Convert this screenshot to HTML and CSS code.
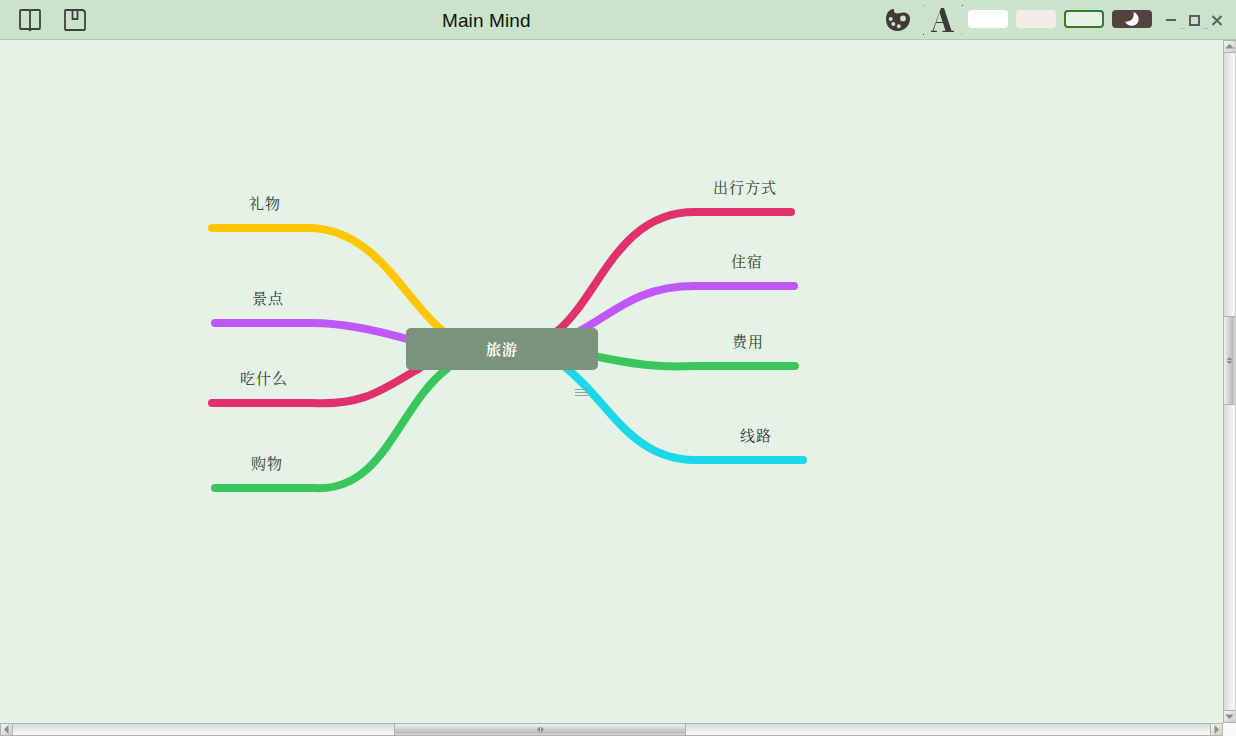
FILE: index.html
```html
<!DOCTYPE html>
<html lang="zh">
<head>
<meta charset="utf-8">
<title>Main Mind</title>
<link rel="stylesheet" href="styles.css">
</head>
<body>
<header class="bar">
  <svg class="icon-book" width="24" height="24" viewBox="0 0 24 24"><path d="M3 2h7.500Q11.500 2 12 3 12.500 2 13.500 2H21Q22 2 22 3V20Q22 21 21 21H13.500L12 22.200 10.500 21H3Q2 21 2 20V3Q2 2 3 2zM12 3v19"/></svg>
  <svg class="icon-save" width="24" height="24" viewBox="0 0 24 24"><path d="M3 2h16.500q2.500.5 2.500 3V21q0 1-1 1H3q-1 0-1-1V3q0-1 1-1zM9.500 2v9h5V2"/></svg>
  <h1 class="title">Main Mind</h1>
  <svg class="icon-palette" width="26" height="24" viewBox="0 0 26 24"><path fill-rule="evenodd" d="M7.500 1C9.500.5 9 2 9 3.500 9.500 5.500 12 6 15 5 19 3.500 24.500 5 25 10c.5 7-5.500 13-12.500 13C5.500 23 1 18 1 11.500 1 6 3 2.500 7.500 1zM18 7.500a2.900 2.900 0 1 0 0 5.800 2.900 2.900 0 1 0 0-5.800zM5.700 9.100a2 2 0 1 0 0 4 2 2 0 1 0 0-4zM8.300 14.100a2 2 0 1 0 0 4 2 2 0 1 0 0-4zM13.800 16.200a2 2 0 1 0 0 4 2 2 0 1 0 0-4z"/></svg>
  <svg class="icon-font" width="40" height="32" viewBox="0 0 40 32"><path d="M18 4h3L28.500 26.700H31V28H19.500v-1.300H22.500L20 19h-7l-2.500 7.700H14V28H8v-1.300h1.500zM16.500 8.500 13.400 18H19.600z" fill-rule="evenodd"/><path d="M0 30h1v1H0zM39 1h1v1h-1z"/><path class="faint" d="M0 2h1V1h1M38 31h1v-1h1"/></svg>
  <div class="themes">
    <button class="swatch white"></button>
    <button class="swatch pink"></button>
    <button class="swatch green"></button>
    <button class="swatch night"><svg width="16" height="16" viewBox="0 0 16 16"><path d="M9.500 1c5 2 6.500 7.500 4 11S4 16.500 1 10.500c5 1 10-3 8.500-9.500z"/></svg></button>
  </div>
  <svg class="window-buttons" width="62" height="20" viewBox="0 0 62 20"><path class="heavy" d="M2 10H12M26 6h9v9h-9zM48.500 6l9 9M57.500 6l-9 9"/><path class="faint" d="M16 18.500h5M39 18.500h5"/></svg>
</header>
<main class="workspace">
  <section class="canvas">
    <svg class="links" width="1223" height="683" viewBox="0 40 1223 683">
      <path class="yellow" d="M212 228H308C377 228 405 302 444 332"/>
      <path class="purple" d="M215 323H312C345 323 380 331 414 341"/>
      <path class="red" d="M212 403H312C365 406 384 388 420 368"/>
      <path class="lime" d="M215 488H315C385 492 398 405 448 368"/>
      <path class="red" d="M791 212H695C616 212 600 298 555 333"/>
      <path class="purple" d="M794 286H695C635 286 612 315 576 333"/>
      <path class="lime" d="M795 366H695C658 368 632 364 594 356"/>
      <path class="cyan" d="M803 460H695C630 460 608 400 565 367"/>
      <path class="grip" d="M575 389.500h13M575 392.500h13M575 395.500h13"/>
    </svg>
    <span class="topic gift">礼物</span>
    <span class="topic sights">景点</span>
    <span class="topic food">吃什么</span>
    <span class="topic shopping">购物</span>
    <span class="topic travel">出行方式</span>
    <span class="topic lodging">住宿</span>
    <span class="topic cost">费用</span>
    <span class="topic route">线路</span>
    <div class="root">旅游</div>
  </section>
  <div class="scroll vertical">
    <i class="arrow"><svg width="9" height="9" viewBox="0 0 9 9"><path d="M0 6.500 4.500 2 9 6.500z"/></svg></i>
    <i class="thumb"><svg width="7" height="9" viewBox="0 0 7 9"><path d="M.5 4 3.500 1 6.500 4zM.5 5 3.500 8 6.500 5z"/></svg></i>
    <i class="arrow"><svg width="9" height="9" viewBox="0 0 9 9"><path d="M0 2.500 4.500 7 9 2.500z"/></svg></i>
  </div>
  <div class="scroll horizontal">
    <i class="arrow"><svg width="9" height="9" viewBox="0 0 9 9"><path d="M6.500 0 2 4.500 6.500 9z"/></svg></i>
    <i class="thumb"><svg width="9" height="7" viewBox="0 0 9 7"><path d="M4 .5 1 3.500 4 6.500zM5 .5 8 3.500 5 6.500z"/></svg></i>
    <i class="arrow"><svg width="9" height="9" viewBox="0 0 9 9"><path d="M2.500 0 7 4.500 2.500 9z"/></svg></i>
  </div>
  <div class="corner"></div>
</main>
</body>
</html>
```
FILE: styles.css
```css
* { box-sizing: border-box; }
body { margin: 0; width: 1236px; height: 736px; overflow: hidden; display: flex; flex-direction: column; background: #e5f3e6; font-family: "Liberation Sans", "Noto Sans CJK SC", sans-serif; }
svg { display: block; flex: none; }
.bar { height: 40px; display: flex; align-items: flex-start; background: #cae4cb; border-bottom: 1px solid #afc9b4; }
.icon-book, .icon-save { margin-top: 8px; fill: none; stroke: #443f3b; stroke-width: 1.8; stroke-linejoin: round; }
.icon-book { margin-left: 18px; }
.icon-save { margin-left: 21px; }
.title { margin: 10px 0 0 355px; width: 443px; font-size: 19px; line-height: 22px; font-weight: 400; letter-spacing: 0.1px; color: #111; white-space: nowrap; }
.icon-palette { margin-top: 8px; fill: #3f3a36; }
.icon-font { margin: 4px 0 0 12px; fill: #3f3a36; }
.faint { fill: none; stroke: #a9c4ab; stroke-width: 1; }
.themes { display: flex; gap: 8px; margin: 10px 0 0 5px; }
.swatch { width: 40px; height: 18px; border: 0; border-radius: 4px; padding: 0; display: flex; justify-content: center; align-items: center; }
.white { background: #fff; }
.pink { background: #f5ece6; }
.green { background: #e5f3e6; border: 2px solid #39792b; }
.night { background: #52433e; }
.night svg { fill: #fff; }
.window-buttons { margin: 10px 0 0 12px; }
.heavy { fill: none; stroke: #5c5c5c; stroke-width: 2; }
.workspace { display: grid; grid-template-columns: 1223px 13px; grid-template-rows: 683px 13px; }
.canvas { position: relative; overflow: hidden; }
.links path { fill: none; stroke-width: 8; stroke-linecap: round; }
.yellow { stroke: #ffc604; }
.purple { stroke: #bf57fa; }
.red { stroke: #e0316d; }
.lime { stroke: #39c65c; }
.cyan { stroke: #1bd7e8; }
.links .grip { stroke: #98a199; stroke-width: 1; stroke-linecap: butt; }
.topic { position: absolute; font-family: "Noto Serif CJK SC", "Noto Sans CJK SC", sans-serif; font-size: 15px; letter-spacing: 1px; line-height: 20px; font-weight: 400; color: #303a30; white-space: nowrap; }
.gift { left: 249px; top: 153px; }
.sights { left: 252px; top: 248px; }
.food { left: 240px; top: 328px; }
.shopping { left: 251px; top: 413px; }
.travel { left: 713px; top: 137px; }
.lodging { left: 731px; top: 211px; }
.cost { left: 732px; top: 291px; }
.route { left: 740px; top: 385px; }
.root { position: absolute; left: 406px; top: 288px; width: 192px; height: 42px; border-radius: 5px; background: #7b927b; color: #fff; font: 700 15px/42px "Noto Serif CJK SC", "Noto Sans CJK SC", sans-serif; letter-spacing: 1px; text-align: center; }
.scroll { display: flex; border: 1px solid #afb5ae; }
.vertical { flex-direction: column; border-right-color: #c7cbc6; background: linear-gradient(90deg, #dadcd7, #fafafa); }
.horizontal { background: linear-gradient(#dadcd7, #fafafa); }
.arrow, .thumb { flex: none; display: flex; align-items: center; justify-content: center; }
.arrow { width: 11px; height: 11px; background: linear-gradient(135deg, #f4f4f1, #cdd0c9); }
.arrow svg, .thumb svg { fill: #8b908a; }
.vertical .arrow { border-bottom: 1px solid #afb5ae; height: 12px; }
.vertical .arrow:last-child { border-top: 1px solid #afb5ae; border-bottom: 0; margin-top: auto; }
.horizontal .arrow { width: 12px; border-right: 1px solid #afb5ae; }
.horizontal .arrow:last-child { border-left: 1px solid #afb5ae; border-right: 0; margin-left: auto; }
.vertical .thumb { margin-top: 263px; height: 89px; border: solid #afb5ae; border-width: 1px 0; background: linear-gradient(90deg, #f0f1ed, #b8bcb5 80%, #dfe1dc); }
.horizontal .thumb { margin-left: 381px; width: 292px; border: solid #afb5ae; border-width: 0 1px; background: linear-gradient(#f0f1ed, #b8bcb5 80%, #dfe1dc); }
.corner { background: #fafafa; }
```
